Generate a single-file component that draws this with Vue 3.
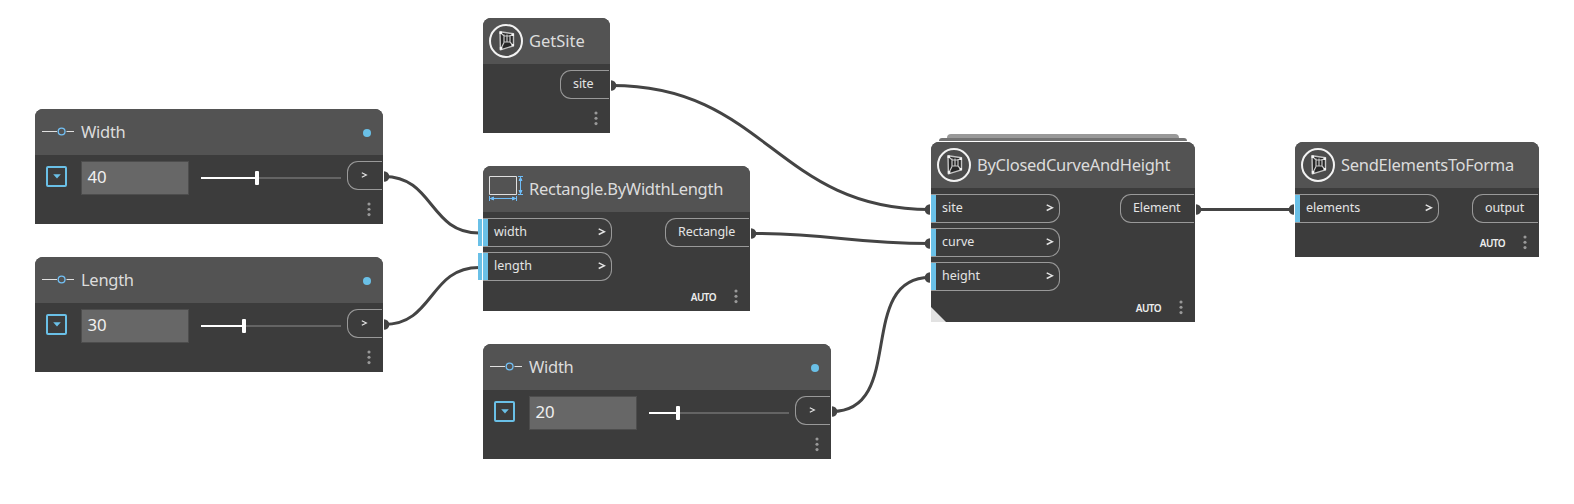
<script setup>
const wires = [
  { from: [384, 176.5], to: [479, 233] },
  { from: [384, 324.5], to: [479, 267.5] },
  { from: [612, 85.5], to: [930, 209.5] },
  { from: [752, 233.5], to: [930, 243.5] },
  { from: [832, 411.5], to: [930, 277.5] },
  { from: [1196, 209.5], to: [1294, 209.5] },
]

function wirePath({ from: [x1, y1], to: [x2, y2] }) {
  const d = Math.max(0.45 * Math.hypot(x2 - x1, y2 - y1), 10)
  return `M${x1} ${y1}C${x1 + d} ${y1} ${x2 - d} ${y2} ${x2} ${y2}`
}

const outSockets = [[384, 176.5], [384, 324.5], [611, 85.5], [751, 233.5], [832, 411.5], [1196, 209.5]]
const inSockets = [[930, 209.5], [930, 243.5], [930, 277.5], [1294, 209.5]]

const nodes = [
  { id: 'width', kind: 'slider', title: 'Width', value: 40, fill: 56 },
  { id: 'length', kind: 'slider', title: 'Length', value: 30, fill: 43 },
  { id: 'height', kind: 'slider', title: 'Width', value: 20, fill: 29 },
  { id: 'site', kind: 'forma', title: 'GetSite', inputs: [], output: 'site' },
  { id: 'rect', kind: 'rect', title: 'Rectangle.ByWidthLength', inputs: ['width', 'length'], output: 'Rectangle', auto: true, defaults: true },
  { id: 'extrude', kind: 'forma', title: 'ByClosedCurveAndHeight', inputs: ['site', 'curve', 'height'], output: 'Element', auto: true, stacked: true },
  { id: 'send', kind: 'forma', title: 'SendElementsToForma', inputs: ['elements'], output: 'output', auto: true },
]
</script>

<template>
  <main class="canvas">
    <svg class="wires" width="1574" height="504" viewBox="0 0 1574 504">
      <path v-for="(w, i) in wires" :key="i" :d="wirePath(w)" />
      <path v-for="([x, y], i) in outSockets" :key="'o' + i" class="socket" :d="`M${x} ${y - 5.3}a5.3 5.3 0 0 1 0 10.6z`" />
      <path v-for="([x, y], i) in inSockets" :key="'i' + i" class="socket" :d="`M${x} ${y - 5.3}a5.3 5.3 0 0 0 0 10.6z`" />
    </svg>

    <section v-for="n in nodes" :key="n.id" class="node" :class="[n.id, n.kind]">
      <template v-if="n.stacked">
        <i class="sheet back"></i>
        <i class="sheet mid"></i>
        <i class="fold"></i>
      </template>
      <header>
        <svg v-if="n.kind === 'slider'" class="icon" width="40" height="46" viewBox="0 0 40 46">
          <path d="M7 22.5h15M31.5 22.5h7.5" stroke="#e0e0e0" />
          <circle cx="26.6" cy="22.5" r="3.4" fill="none" stroke="#72c0f5" stroke-width="1.3" />
        </svg>
        <svg v-else-if="n.kind === 'rect'" class="icon" width="40" height="46" viewBox="0 0 40 46">
          <path d="M6.5 10.5h27v18h-27z" fill="none" stroke="#e0e0e0" />
          <g stroke="#6fbdf8" fill="#6fbdf8">
            <path d="M6.5 30v5M33.5 30v5M7 32.5h26M35 10.5h5M35 28.5h5M37.5 11v17" />
            <path d="M7.5 32.5l3-1.5v3zM32.5 32.5l-3-1.5v3zM37.5 11.5l-1.5 3h3zM37.5 27.5l-1.5-3h3z" />
          </g>
        </svg>
        <svg v-else class="icon" width="40" height="46" viewBox="0 0 40 46">
          <circle cx="23" cy="23" r="16" fill="#4c4c4c" stroke="#f2f2f2" stroke-width="2" />
          <path d="M17 13.8L30.500 15.800V27.800L17.400 31.800z" fill="#262626" stroke="#c4c4c4" stroke-width="1.4" stroke-linejoin="round" />
          <path d="M21 16.500V24H27V17M24 16.500V23.500M18.500 29.500L21 24.500M29.500 26.800L27 24M18.500 15.500L21 18H27L29 17" fill="none" stroke="#c8c8c8" stroke-width="1.200" />
          <path d="M16.500 13.500h2.500v2.500h-2.500zM28.500 15.500h2.500v2.500h-2.500zM28.500 26h2.500v2.300h-2.500zM16.800 29h2.500v2.700h-2.500z" fill="#f4f4f4" />
        </svg>
        <h2>{{ n.title }}</h2>
        <b v-if="n.kind === 'slider'" class="state"></b>
      </header>

      <div v-if="n.kind === 'slider'" class="controls">
        <span class="toggle"><svg width="8" height="5"><path d="M.2 .3h7.6L4 4.5z" /></svg></span>
        <span class="field">{{ n.value }}</span>
        <span class="track"><i class="done" :style="{ width: n.fill + 'px' }"></i><i class="thumb"></i></span>
        <span class="out small"><svg class="chev" width="7" height="8"><path d="M.8 1.8L5.3 4 .8 6.2" /></svg></span>
      </div>
      <div v-else class="ports">
        <div class="ins">
          <span v-for="p in n.inputs" :key="p" class="in" :class="{ preset: n.defaults }">
            {{ p }}
            <svg class="chev" width="8" height="9"><path d="M.7 1.9L6.4 4.7 .7 7.5" /></svg>
          </span>
        </div>
        <span class="out"><em>{{ n.output }}</em></span>
      </div>

      <footer>
        <span v-if="n.auto">AUTO</span>
        <svg width="4" height="15"><circle cx="2" cy="2" r="1.55" /><circle cx="2" cy="7.3" r="1.55" /><circle cx="2" cy="12.6" r="1.55" /></svg>
      </footer>
    </section>
  </main>
</template>

<style>
body { margin: 0; background: #fff; }
</style>

<style scoped>
.canvas { position: relative; width: 1574px; height: 504px; overflow: hidden; background: #fff; font-family: "Noto Sans", "Open Sans", sans-serif; }
.wires { position: absolute; inset: 0; }
.wires path { fill: none; stroke: #444; stroke-width: 3; }
.wires .socket { fill: #444; stroke: none; }

/* node positions on the graph canvas */
.node { position: absolute; display: flex; flex-direction: column; height: 115px; background: #3c3c3c; border-radius: 8px 8px 0 0; color: #e4e4e4; }
.slider { width: 348px; }
.width { left: 35px; top: 109px; }
.length { left: 35px; top: 257px; }
.height { left: 483px; top: 344px; }
.site { left: 483px; top: 18px; width: 127px; }
.rect.node { left: 483px; top: 166px; width: 267px; height: 145px; }
.extrude { left: 931px; top: 142px; width: 264px; height: 180px; }
.send { left: 1295px; top: 142px; width: 244px; }

header { display: flex; align-items: center; height: 46px; background: #535353; border-radius: 8px 8px 0 0; }
.icon { flex: none; overflow: visible; }
h2 { flex: 1; margin: 0 0 0 6px; font-size: 16.5px; line-height: 46px; font-weight: 400; letter-spacing: -0.28px; color: #dcdcdc; white-space: nowrap; }
.site h2 { letter-spacing: 0; }
.state { width: 8px; height: 8px; margin: 2px 12px 0 0; border-radius: 50%; background: #6ac0e7; }

.controls { display: flex; align-items: flex-start; margin-top: 6px; height: 34px; }
.toggle { display: grid; place-items: center; box-sizing: border-box; width: 21px; height: 21px; margin: 5px 0 0 11px; border: 2px solid #6ac0e7; border-radius: 2px; }
.toggle path { fill: #6ac0e7; }
.field { box-sizing: border-box; width: 108px; height: 34px; margin-left: 14px; padding-left: 5.5px; border: 1px solid #4d4d4d; background: #676767; font-size: 16.8px; line-height: 29px; letter-spacing: -0.2px; color: #f0f0f0; }
.track { display: flex; align-items: center; width: 140px; height: 2px; margin: 16px 6px 0 12px; background: #646464; }
.done { height: 2px; background: #fff; }
.thumb { width: 4px; height: 14px; margin-left: -2px; border-radius: 1px; background: #fff; }

.ports { display: flex; justify-content: space-between; margin-top: 6px; }
.ins { display: flex; flex-direction: column; gap: 5px; }
.in { position: relative; display: flex; align-items: center; justify-content: space-between; box-sizing: border-box; height: 29px; padding: 0 5px 2px 11px; border: 1px solid #999; border-left: 0; border-radius: 0 11px 11px 0; font-size: 12.5px; }
.in::before { content: ""; position: absolute; left: 0; top: 0; width: 5px; height: 27px; background: #6ac0e7; }
.preset::after { content: ""; position: absolute; left: -5px; top: 0; width: 4px; height: 27px; background: #6ac0e7; box-shadow: 1px 0 #fff; }
.rect .in, .extrude .in { width: 129px; }
.send .in { width: 144px; }
.out { display: flex; align-items: center; box-sizing: border-box; height: 29px; margin-right: 1px; padding: 0 0 2px 12px; border: 1px solid #999; border-right: 0; border-radius: 11px 0 0 11px; font-size: 12.5px; }
.out em { font-style: normal; letter-spacing: -0.1px; }
.small { width: 35px; padding-left: 13px; padding-bottom: 2px; }
.site .out { width: 49px; }
.rect .out { width: 84px; }
.extrude .out { width: 74px; }
.send .out { width: 66px; }
.chev path { fill: none; stroke: #e4e4e4; stroke-width: 1.4; }
.small .chev path { stroke-width: 1.2; }

footer { display: flex; justify-content: flex-end; align-items: center; gap: 18px; height: 15px; margin: auto 12px 7px 0; font-size: 10px; font-weight: 600; letter-spacing: -0.6px; color: #eee; }
footer circle { fill: #999; }

.sheet { position: absolute; }
.back { left: 16px; top: -8px; width: 232px; height: 4px; border-radius: 5px 5px 0 0; background: #999; }
.mid { left: 8px; top: -4px; width: 248px; height: 3px; border-radius: 6px 6px 0 0; background: #737373; }
.fold { position: absolute; left: 0; bottom: 0; width: 15px; height: 15px; background: #e2e2e2; clip-path: polygon(0 0, 100% 100%, 0 100%); }
</style>
